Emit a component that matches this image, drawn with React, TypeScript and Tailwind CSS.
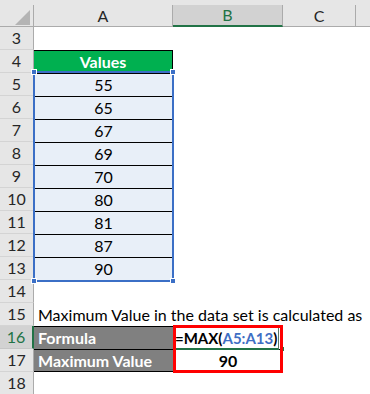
import React from "react";

const values = [55, 65, 67, 69, 70, 80, 81, 87, 90];

function RowHead({ n, active }: { n: number; active?: boolean }) {
  return (
    <div
      className={
        active
          ? "w-[34px] shrink-0 h-full flex items-center justify-center bg-[#d2d2d2] text-[#217346] border-r-2 border-r-[#217346] border-b border-b-[#c6c6c6]"
          : "w-[34px] shrink-0 h-full flex items-center justify-center bg-[#e6e6e6] text-[#262626] border-r border-r-[#ababab] border-b border-b-[#d4d4d4]"
      }
    >
      {n}
    </div>
  );
}

function Row({ n, active, children }: { n: number; active?: boolean; children?: React.ReactNode }) {
  return (
    <div className="flex h-[23px] w-full">
      <RowHead n={n} active={active} />
      {children}
    </div>
  );
}

export default function App() {
  return (
    <div className="relative w-[370px] h-[394px] overflow-hidden bg-white font-['Lato','Liberation_Sans',sans-serif] text-[16px] text-black">
      {/* column headers */}
      <div className="h-[5px] bg-[#e6e6e6]" />
      <div className="flex h-[22px] bg-[#e6e6e6] text-[#262626]">
        <div className="relative w-[34px] shrink-0 border-r border-r-[#ababab] border-b border-b-[#ababab]">
          <svg className="absolute left-[15px] top-[5px]" width="15" height="15" viewBox="0 0 15 15">
            <polygon points="15,0 15,15 0,15" fill="#b4b4b4" />
          </svg>
        </div>
        <div className="w-[139px] shrink-0 flex items-center justify-center border-r border-r-[#ababab] border-b border-b-[#ababab]">
          A
        </div>
        <div className="w-[110px] shrink-0 flex items-center justify-center bg-[#d2d2d2] text-[#217346] border-r border-r-[#ababab] border-b-2 border-b-[#217346]">
          B
        </div>
        <div className="w-[73px] shrink-0 flex items-center justify-center border-r border-r-[#ababab] border-b border-b-[#ababab]">
          C
        </div>
        <div className="flex-1 border-b border-b-[#ababab]" />
      </div>

      <Row n={3} />
      <Row n={4}>
        <div className="w-[139px] shrink-0 flex items-center justify-center bg-[#00b050] text-white font-bold border-t border-r border-black">
          Values
        </div>
      </Row>
      {values.map((v, i) => (
        <Row key={v} n={5 + i}>
          <div className="w-[139px] shrink-0 flex items-center justify-center bg-[#e8eff8] border-t border-black">
            {v}
          </div>
        </Row>
      ))}
      <Row n={14} />
      <Row n={15}>
        <div className="pl-[4px] flex items-center whitespace-nowrap">
          Maximum Value in the data set is calculated as
        </div>
      </Row>
      <Row n={16} active>
        <div className="w-[139px] shrink-0 flex items-center pl-[4px] bg-[#808080] text-white font-bold border-t border-black">
          Formula
        </div>
        <div className="w-[110px] shrink-0 flex items-center pl-[2px] text-[15px] font-bold border-t border-black whitespace-nowrap">
          =MAX(<span className="text-[#3f6fc4]">A5:A13</span>)
        </div>
      </Row>
      <Row n={17}>
        <div className="w-[139px] shrink-0 flex items-center pl-[4px] bg-[#808080] text-white font-bold border-y border-black">
          Maximum Value
        </div>
        <div className="w-[110px] shrink-0 flex items-center justify-center font-bold border-y border-black">
          90
        </div>
      </Row>
      <Row n={18} />

      {/* range selection A5:A13 */}
      <div className="absolute left-[33px] top-[71px] w-[141px] h-[211px] border-2 border-[#3b6fc6] pointer-events-none" />
      <div className="absolute left-[31px] top-[69px] w-[6px] h-[6px] bg-[#3b6fc6] border border-white" />
      <div className="absolute left-[170px] top-[69px] w-[6px] h-[6px] bg-[#3b6fc6] border border-white" />
      <div className="absolute left-[170px] top-[278px] w-[6px] h-[6px] bg-[#3b6fc6] border border-white" />
      <div className="absolute left-[31px] top-[278px] w-[6px] h-[6px] bg-[#3b6fc6] border border-white" />

      {/* active cell B16 */}
      <div className="absolute left-[174px] top-[327px] w-[105px] h-[23px] border-r border-r-[#5a7a66] border-b-2 border-b-[#217346]" />
      <div className="absolute left-[280px] top-[346px] w-[5px] h-[6px] bg-[#217346] border border-white" />

      {/* highlight box B16:B17 */}
      <div className="absolute left-[173px] top-[325px] w-[110px] h-[48px] border-[3px] border-[#ff0000]" />
    </div>
  );
}
